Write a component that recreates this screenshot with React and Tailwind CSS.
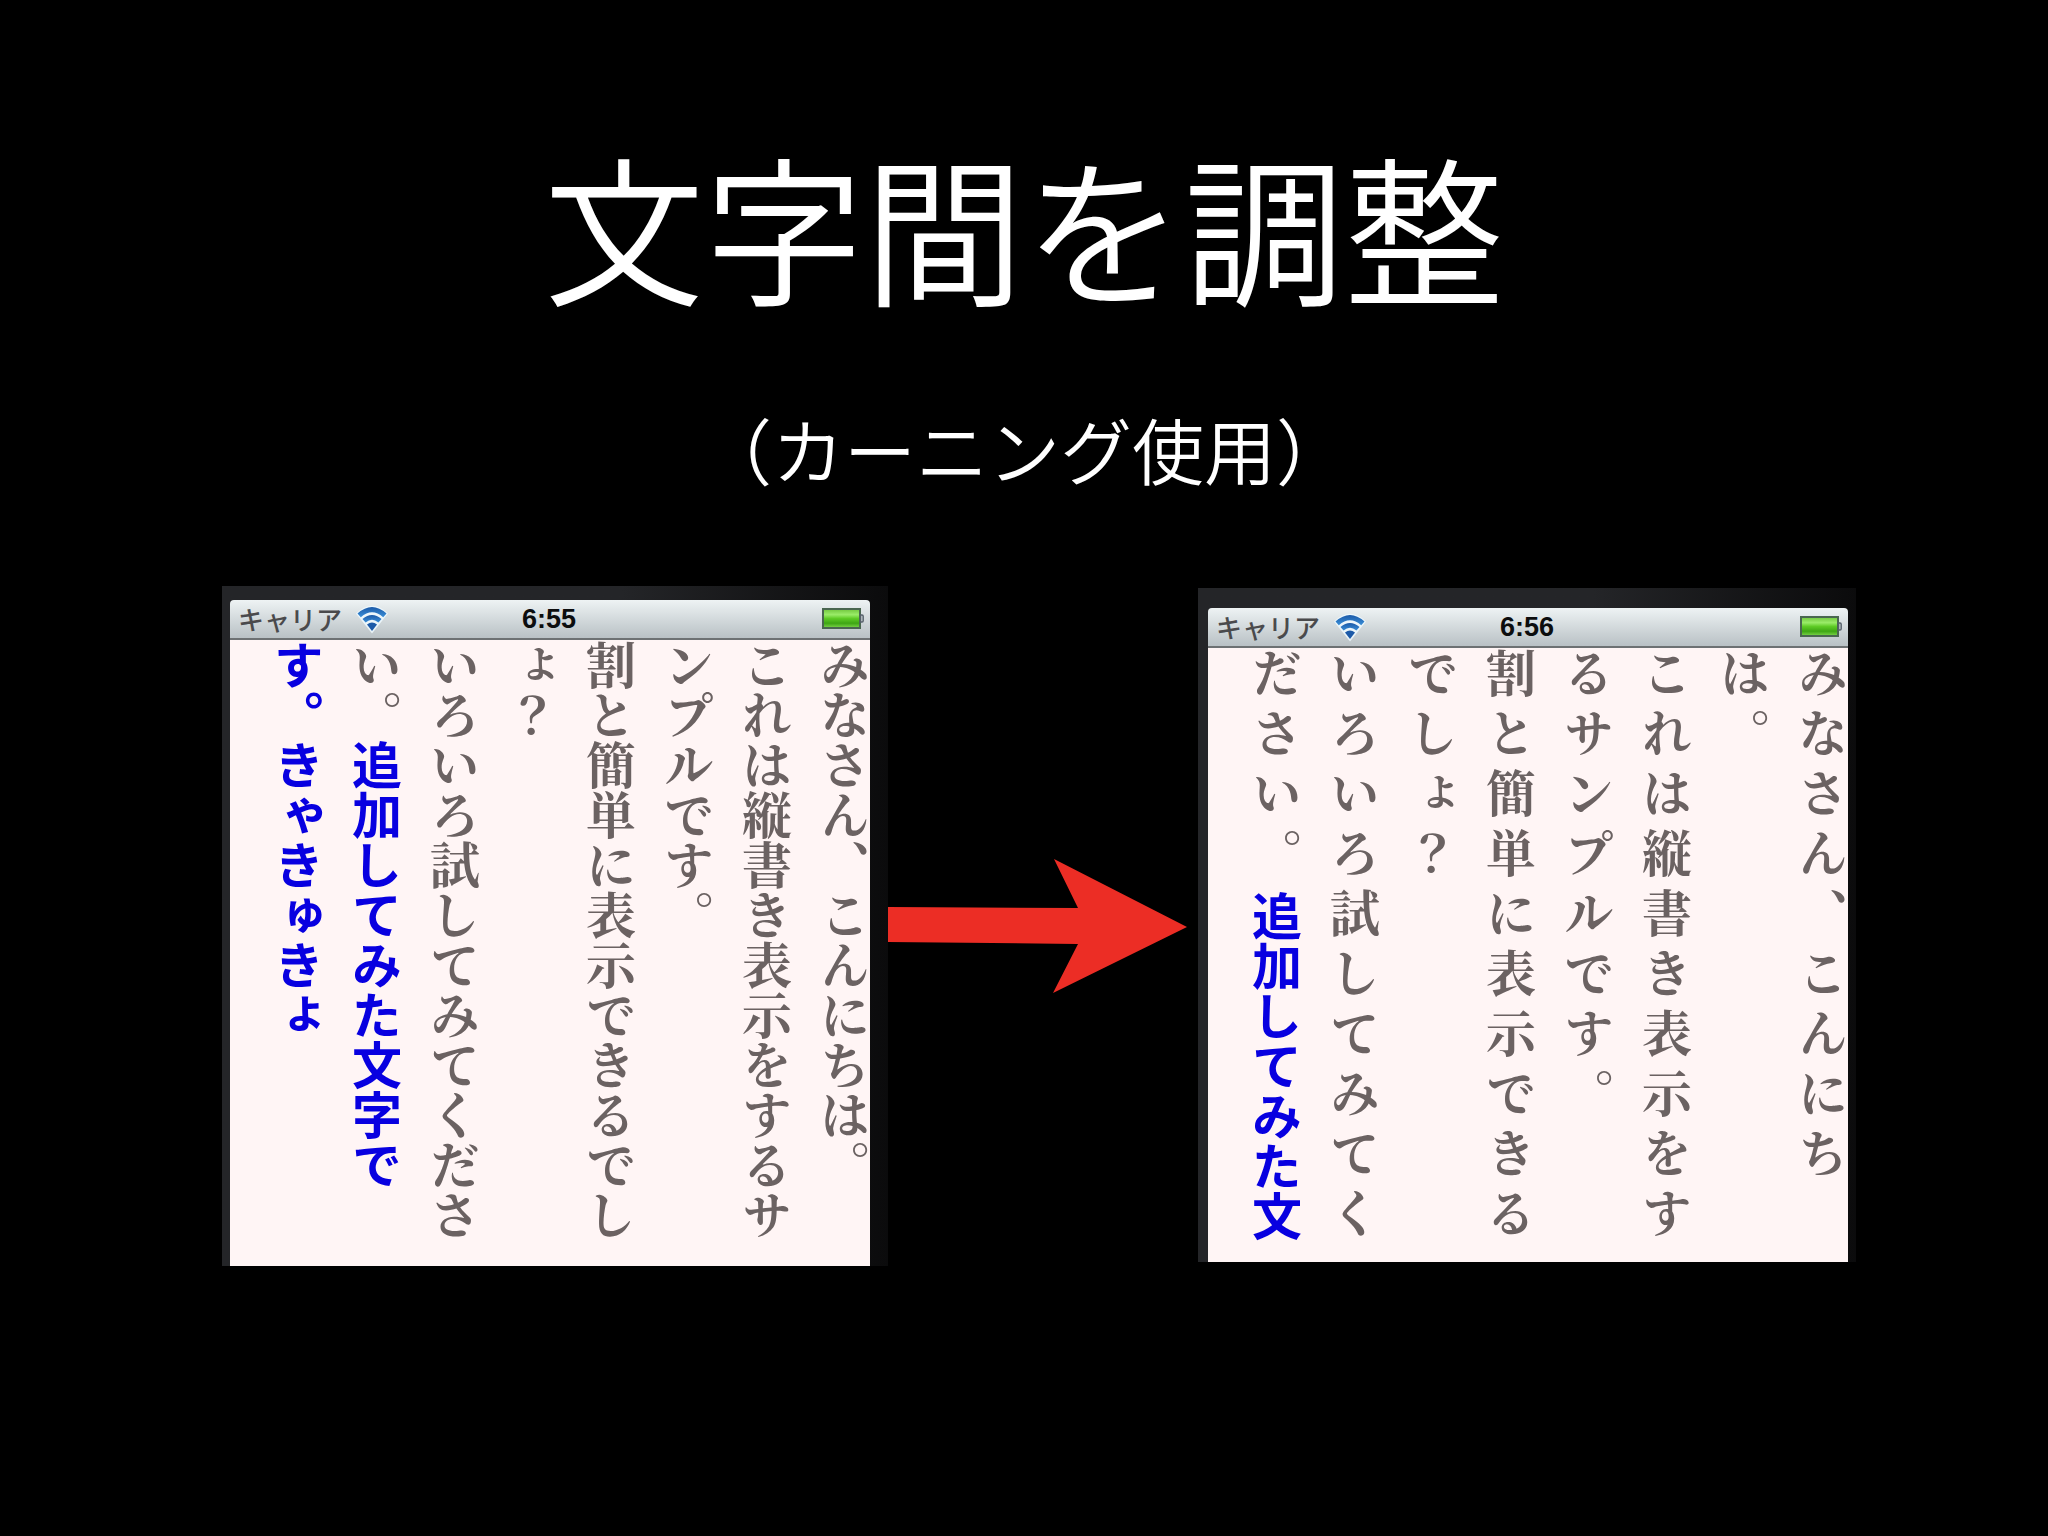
import React from "react";

const BEFORE = [
  [{ text: "みなさん、こんにちは。" }],
  [{ text: "これは縦書き表示をするサ" }],
  [{ text: "ンプルです。" }],
  [{ text: "割と簡単に表示できるでし" }],
  [{ text: "ょ？" }],
  [{ text: "いろいろ試してみてくださ" }],
  [{ text: "い。" }, { text: "追加してみた文字で", added: true }],
  [{ text: "す。きゃきゅきょ", added: true }],
];

const AFTER = [
  [{ text: "みなさん、こんにち" }],
  [{ text: "は。" }],
  [{ text: "これは縦書き表示をす" }],
  [{ text: "るサンプルです。" }],
  [{ text: "割と簡単に表示できる" }],
  [{ text: "でしょ？" }],
  [{ text: "いろいろ試してみてく" }],
  [{ text: "ださい。" }, { text: "追加してみた文", added: true }],
];

function WifiIcon() {
  return (
    <svg viewBox="0 0 32 30" className="h-[30px] w-8" aria-label="Wi-Fi" role="img">
      <defs>
        <linearGradient id="wifi" x1="0" y1="0" x2="0" y2="1">
          <stop offset="0" stopColor="#1c5aa8" />
          <stop offset="1" stopColor="#3a8fd8" />
        </linearGradient>
      </defs>
      <path d="M16 29.5 0 9.5Q16-6 32 9.5Z" fill="#f0faff" opacity="0.85" />
      <path d="M1.5 9.5Q16-3.5 30.5 9.5L27.2 13.2Q16 3.5 4.8 13.2Z" fill="url(#wifi)" />
      <path d="M6.5 15Q16 7 25.5 15L22.4 18.6Q16 13 9.6 18.6Z" fill="url(#wifi)" />
      <path d="M11 20.6Q16 16.2 21 20.6L16 27Z" fill="#1c5aa8" />
    </svg>
  );
}

function BatteryIcon() {
  return (
    <svg viewBox="0 0 42 22" className="h-[22px] w-[42px]" aria-label="Battery" role="img">
      <defs>
        <linearGradient id="cell" x1="0" y1="0" x2="0" y2="1">
          <stop offset="0" stopColor="#6fc53c" />
          <stop offset="0.3" stopColor="#9aec68" />
          <stop offset="0.5" stopColor="#5ecb25" />
          <stop offset="0.75" stopColor="#3ea614" />
          <stop offset="1" stopColor="#7fd84c" />
        </linearGradient>
      </defs>
      <rect x="1" y="1" width="37" height="19" fill="url(#cell)" stroke="#4a6650" strokeWidth="2" />
      <path d="M38.5 7h1.5q1.2 0 1.2 1.2v4.6q0 1.2-1.2 1.2h-1.5z" fill="#c3cccf" stroke="#56606a" strokeWidth="1.4" />
    </svg>
  );
}

function StatusBar({ time }) {
  return (
    <header className="grid h-10 grid-cols-3 items-center rounded-t-sm border-b-2 border-[#6d7173] bg-linear-to-b from-[#eef3f4] to-[#b9c1c5] pr-1.5 pl-2">
      <div className="flex items-center gap-3.5">
        <span className="text-[26px] leading-8 font-medium text-[#4a4a4c]">キャリア</span>
        <WifiIcon />
      </div>
      <time className="pr-1 text-center font-['Liberation_Sans',sans-serif] text-[27px] leading-8 font-bold text-[#0c0d0e]">
        {time}
      </time>
      <div className="flex justify-end">
        <BatteryIcon />
      </div>
    </header>
  );
}

function Column({ runs, spaced }) {
  return (
    <p className={spaced ? "-mt-2 flex w-[50px] flex-col" : "-mt-[3px] flex w-[50px] flex-col"}>
      {runs.map((run) => (
        <span
          key={run.text}
          className={[
            "w-[50px] text-[50px] wrap-anywhere [line-break:anywhere] [font-feature-settings:'vert']",
            run.added
              ? "font-['Noto_Sans_CJK_JP',sans-serif] font-bold text-[#0800e0]"
              : "font-['Noto_Serif_CJK_JP','Noto_Sans_CJK_JP',serif] font-bold text-[#6b6262]",
            spaced && !run.added ? "leading-[60px]" : "leading-[50px]",
            spaced && run.added ? "pt-2" : "",
          ].join(" ")}
        >
          {run.text}
        </span>
      ))}
    </p>
  );
}

function Phone({ time, columns, spaced, className, bodyClass }) {
  return (
    <section className={"bg-linear-to-r from-[#242528] from-60% to-[#0b0b0c] " + className}>
      <StatusBar time={time} />
      <div className={"flex flex-row-reverse gap-7 bg-[#fff5f5] " + bodyClass}>
        {columns.map((runs) => (
          <Column key={runs[0].text} runs={runs} spaced={spaced} />
        ))}
      </div>
    </section>
  );
}

export default function App() {
  return (
    <main
      lang="ja"
      className="flex min-h-screen flex-col items-center bg-black pt-36 font-['Noto_Sans_CJK_JP',sans-serif] text-white"
    >
      <h1 className="text-[160px] leading-[160px] font-[350]">文字間を調整</h1>
      <p className="mt-[108px] text-[72px] leading-[72px] font-[350]">（カーニング使用）</p>
      <div className="mt-[102px] flex items-start pl-[30px]">
        <Phone
          time="6:55"
          columns={BEFORE}
          className="w-[666px] pt-[14px] pr-[18px] pl-2"
          bodyClass="h-[626px]"
        />
        <svg viewBox="0 0 300 136" className="mt-[272px] h-[136px] w-[300px]" role="img" aria-label="右矢印">
          <path d="M0 49 190 50 166 1 299 69 165 135 190 86 0 84Z" fill="#ec2d25" />
        </svg>
        <Phone
          time="6:56"
          columns={AFTER}
          spaced
          className="mt-0.5 ml-2.5 w-[658px] pt-5 pr-2 pl-2.5"
          bodyClass="h-[614px]"
        />
      </div>
    </main>
  );
}
